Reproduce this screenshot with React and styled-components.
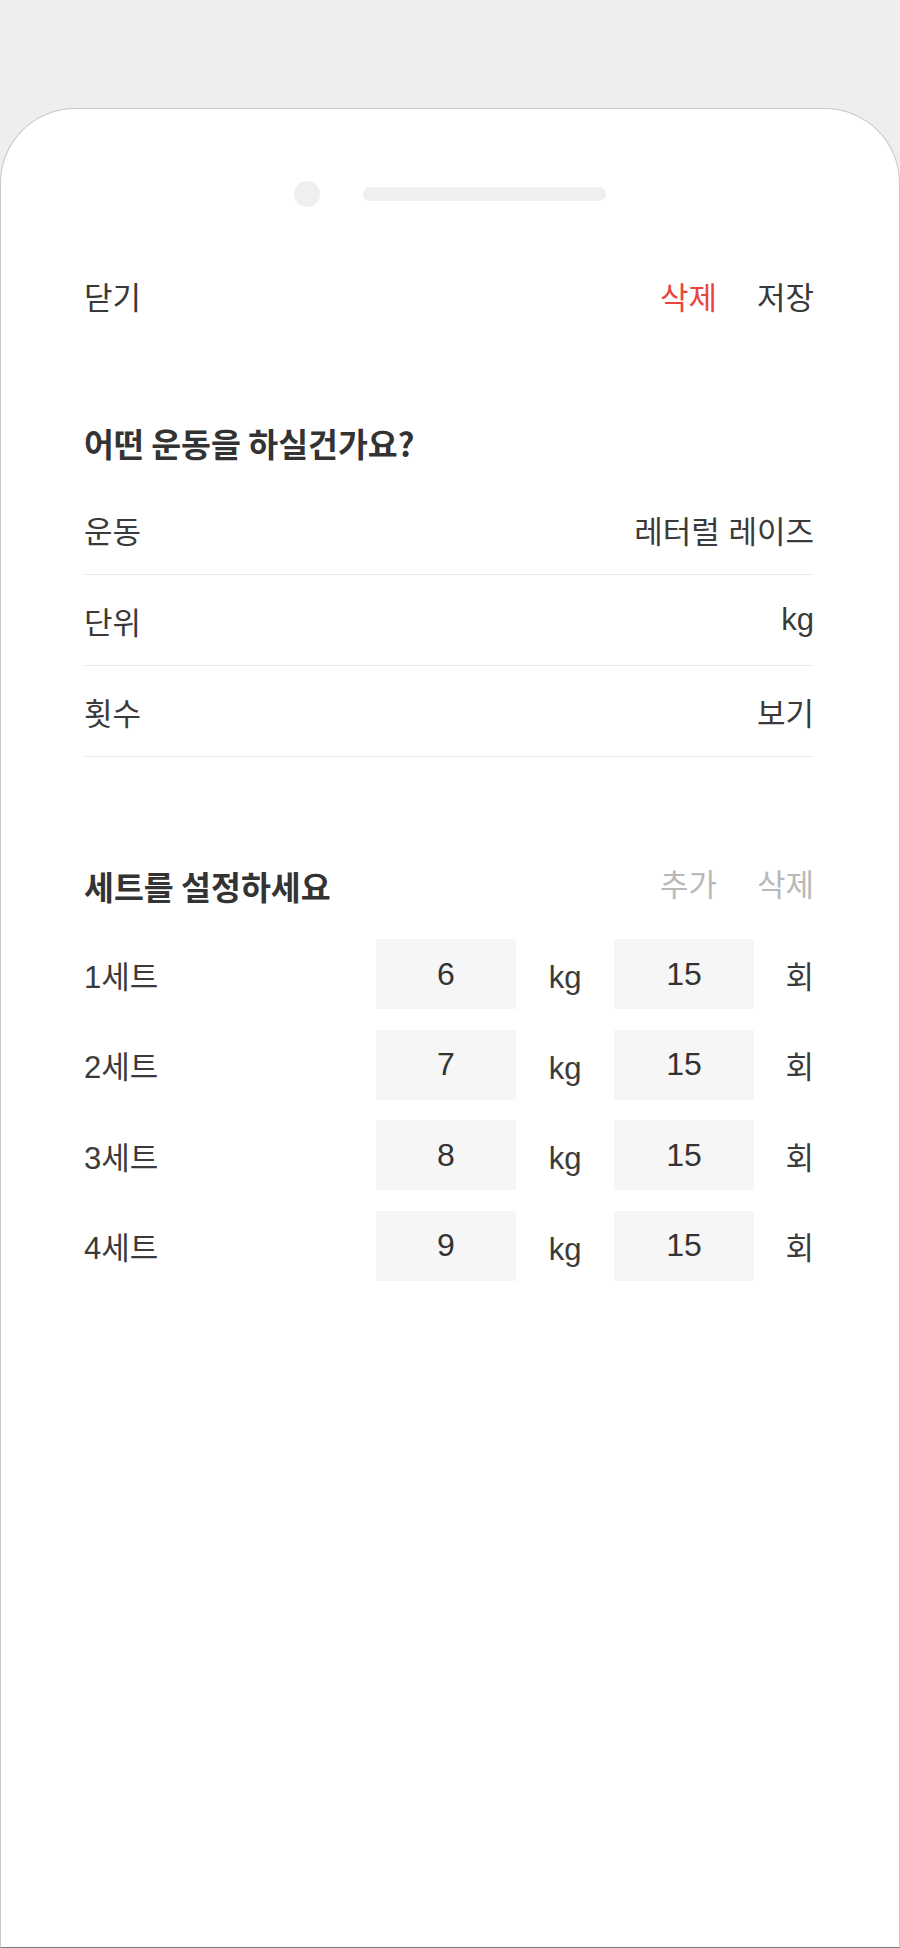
import styled, { createGlobalStyle } from "styled-components"

const GlobalStyle = createGlobalStyle`
  html, body {
    margin: 0;
    padding: 0;
    background: #eeeeee;
  }
  body {
    font-family: "Liberation Sans", "Noto Sans CJK KR", sans-serif;
    color: #383838;
  }
  * { box-sizing: border-box; }
`

const Phone = styled.div`
  margin-top: 108px;
  height: 1840px;
  background: #ffffff;
  border: 1px solid #c9c9c9;
  border-bottom-color: #7a7a7a;
  border-radius: 75px 75px 0 0;
  padding: 0 85px 0 83px;
  display: flex;
  flex-direction: column;
`

const Notch = styled.div`
  margin-top: 72px;
  height: 26px;
  display: flex;
  justify-content: center;
  align-items: center;
  gap: 43px;
  margin-left: -83px;
  margin-right: -85px;
`

const Camera = styled.span`
  width: 26px;
  height: 26px;
  border-radius: 50%;
  background: #efefef;
`

const Speaker = styled.span`
  width: 243px;
  height: 14px;
  border-radius: 7px;
  background: #efefef;
`

const Header = styled.header`
  margin-top: 46px;
  height: 90px;
  display: flex;
  align-items: center;
  justify-content: space-between;
`

const Actions = styled.div`
  display: flex;
  align-items: center;
  gap: ${({ gap }) => gap || 40}px;
`

const TextButton = styled.button`
  border: 0;
  background: none;
  padding: 0;
  font-family: inherit;
  font-size: 31px;
  line-height: 1;
  color: ${({ tone }) =>
    tone === "danger" ? "#e9453f" : tone === "muted" ? "#b9b9b9" : "#383838"};
  cursor: pointer;
`

const SectionHead = styled.div`
  margin-top: ${({ top }) => top}px;
  height: 60px;
  display: flex;
  align-items: center;
  justify-content: space-between;
`

const SectionTitle = styled.h2`
  margin: 0;
  font-family: "Noto Sans CJK KR", sans-serif;
  font-size: 32.5px;
  font-weight: 700;
  color: #333333;
`

const InfoList = styled.div`
  margin-top: 12px;
  display: flex;
  flex-direction: column;
`

const InfoRow = styled.div`
  height: 91px;
  display: flex;
  align-items: center;
  justify-content: space-between;
  border-bottom: 1px solid #ebebeb;
  font-size: 31px;
  color: #3a3a3a;
`

const SetList = styled.div`
  margin-top: 24px;
  display: flex;
  flex-direction: column;
  gap: 20.5px;
`

const SetRow = styled.div`
  height: 70px;
  display: grid;
  grid-template-columns: 1fr 140px 98px 140px 60px;
  align-items: center;
  font-size: 31px;
  color: #3a3a3a;
`

const ValueBox = styled.div`
  height: 70px;
  background: #f6f6f6;
  display: flex;
  align-items: center;
  justify-content: center;
  color: #333333;
  font-size: 32px;
`

const Unit = styled.span`
  text-align: ${({ align }) => align || "center"};
  padding-top: ${({ low }) => (low ? 8 : 0)}px;
`

const exercise = [
  { label: "운동", value: "레터럴 레이즈" },
  { label: "단위", value: "kg" },
  { label: "횟수", value: "보기" },
]

const sets = [
  { weight: 6, reps: 15 },
  { weight: 7, reps: 15 },
  { weight: 8, reps: 15 },
  { weight: 9, reps: 15 },
]

export default function App() {
  return (
    <>
      <GlobalStyle />
      <Phone>
        <Notch>
          <Camera />
          <Speaker />
        </Notch>

        <Header>
          <TextButton>닫기</TextButton>
          <Actions>
            <TextButton tone="danger">삭제</TextButton>
            <TextButton>저장</TextButton>
          </Actions>
        </Header>

        <SectionHead top={69}>
          <SectionTitle>어떤 운동을 하실건가요?</SectionTitle>
        </SectionHead>
        <InfoList>
          {exercise.map((row) => (
            <InfoRow key={row.label}>
              <span>{row.label}</span>
              <span>{row.value}</span>
            </InfoRow>
          ))}
        </InfoList>

        <SectionHead top={98}>
          <SectionTitle>세트를 설정하세요</SectionTitle>
          <Actions>
            <TextButton tone="muted">추가</TextButton>
            <TextButton tone="muted">삭제</TextButton>
          </Actions>
        </SectionHead>
        <SetList>
          {sets.map((s, i) => (
            <SetRow key={i}>
              <span>{i + 1}세트</span>
              <ValueBox>{s.weight}</ValueBox>
              <Unit low>kg</Unit>
              <ValueBox>{s.reps}</ValueBox>
              <Unit align="right">회</Unit>
            </SetRow>
          ))}
        </SetList>
      </Phone>
    </>
  )
}
